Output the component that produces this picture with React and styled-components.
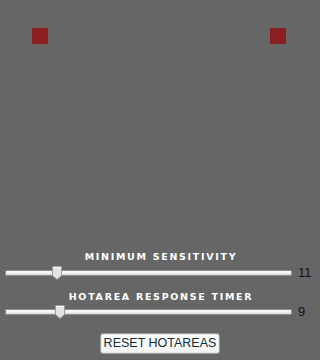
import React from "react";
import styled, { createGlobalStyle } from "styled-components";

const Global = createGlobalStyle`
  html, body { margin: 0; padding: 0; background: #666666; }
  #root { width: 320px; height: 360px; }
`;

const Stage = styled.div`
  width: 320px;
  height: 360px;
  background: #666666;
  display: flex;
  flex-direction: column;
  box-sizing: border-box;
  padding-bottom: 6px;
  overflow: hidden;
`;

const TopRow = styled.div`
  display: flex;
  justify-content: space-between;
  padding: 28px 34px 0 32px;
`;

const Hotarea = styled.div`
  width: 16px;
  height: 16px;
  background: #8b1e1e;
`;

const Controls = styled.div`
  margin-top: auto;
  display: flex;
  flex-direction: column;
  align-items: stretch;
`;

const Label = styled.div`
  height: 10px;
  line-height: 10px;
  text-align: center;
  color: #ffffff;
  font-family: "DejaVu Sans", Verdana, sans-serif;
  font-weight: bold;
  font-size: 9.5px;
  letter-spacing: 1.7px;
  margin-bottom: ${(p) => p.$gap}px;
  padding-left: 2px;
`;

const SliderRow = styled.div`
  display: flex;
  align-items: center;
  height: 14px;
  padding-left: 5px;
  margin-bottom: ${(p) => p.$gap}px;
`;

const TrackWrap = styled.div`
  position: relative;
  width: 287px;
  height: 14px;
  display: flex;
  align-items: center;
`;

const Track = styled.div`
  width: 100%;
  height: 6px;
  box-sizing: border-box;
  border: 1px solid #8c8c8c;
  border-radius: 1px;
  background: linear-gradient(#ffffff 0%, #f2f2f2 50%, #d8d8d8 100%);
`;

const Thumb = styled.svg`
  position: absolute;
  top: 0;
  width: 10px;
  height: 14px;
`;

const Value = styled.div`
  margin-left: 6px;
  font-family: "Liberation Sans", Arial, sans-serif;
  font-size: 13px;
  color: #111111;
  line-height: 14px;
`;

const ButtonRow = styled.div`
  display: flex;
  justify-content: center;
`;

const Button = styled.button`
  width: 120px;
  height: 21px;
  box-sizing: border-box;
  margin: 0;
  padding: 0;
  border: 1px solid #9aa0a0;
  border-radius: 3px;
  background: linear-gradient(#ffffff, #f1f3f3);
  box-shadow: inset 0 0 0 1px #e4e8e8;
  font-family: "Liberation Sans", Arial, sans-serif;
  font-size: 12.5px;
  color: #0f2c30;
  line-height: 19px;
`;

function Slider({ pos, value, gap }) {
  return (
    <SliderRow $gap={gap}>
      <TrackWrap>
        <Track />
        <Thumb viewBox="0 0 10 14" style={{ left: `${pos}px` }}>
          <path
            d="M0.5 0.5 H9.5 V9.5 L5 13.5 L0.5 9.5 Z"
            fill="#e4e4e4"
            stroke="#9a9a9a"
            strokeWidth="1"
          />
          <path d="M1.5 1.5 H8.5" stroke="#ffffff" strokeWidth="1" />
        </Thumb>
      </TrackWrap>
      <Value>{value}</Value>
    </SliderRow>
  );
}

export default function App() {
  return (
    <Stage>
      <Global />
      <TopRow>
        <Hotarea />
        <Hotarea />
      </TopRow>
      <Controls>
        <Label $gap={4}>MINIMUM SENSITIVITY</Label>
        <Slider pos={47} value="11" gap={12} />
        <Label $gap={3}>HOTAREA RESPONSE TIMER</Label>
        <Slider pos={50} value="9" gap={14} />
        <ButtonRow>
          <Button>RESET HOTAREAS</Button>
        </ButtonRow>
      </Controls>
    </Stage>
  );
}
